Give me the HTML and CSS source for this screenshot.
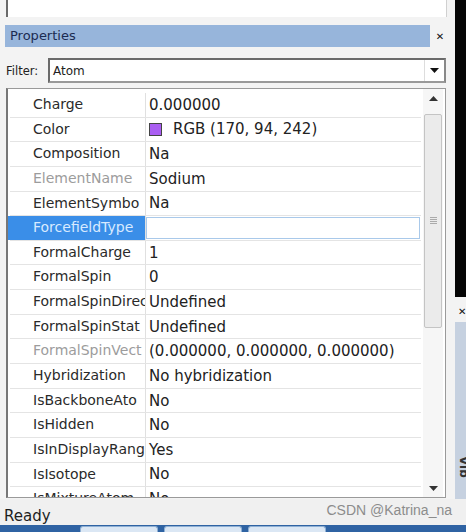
FILE: index.html
```html
<!DOCTYPE html>
<html>
<head>
<meta charset="utf-8">
<link rel="stylesheet" href="styles.css">
</head>
<body>
<div class="app">
  <div class="workspace">
    <div class="main">
      <div class="topbox"></div>
      <div class="header">
        <div class="title">Properties</div>
        <div class="close">&#x2715;</div>
      </div>
      <div class="filter">
        <span class="filter-label">Filter:</span>
        <div class="combo">
          <span class="combo-text">Atom</span>
          <span class="combo-btn"><svg width="9" height="5" viewBox="0 0 9 5"><path d="M0 0H9L4.5 5Z" fill="#111"/></svg></span>
        </div>
      </div>
      <div class="grid">
        <div class="rows">
          <div class="row"><span class="gut"></span><span class="name">Charge</span><span class="val">0.000000</span></div>
          <div class="row"><span class="gut"></span><span class="name">Color</span><span class="val"><span class="swatch"></span>RGB (170, 94, 242)</span></div>
          <div class="row"><span class="gut"></span><span class="name">Composition</span><span class="val">Na</span></div>
          <div class="row"><span class="gut"></span><span class="name dim">ElementName</span><span class="val">Sodium</span></div>
          <div class="row"><span class="gut"></span><span class="name">ElementSymbo</span><span class="val">Na</span></div>
          <div class="row sel"><span class="gut"></span><span class="name">ForcefieldType</span><span class="val edit"></span></div>
          <div class="row"><span class="gut"></span><span class="name">FormalCharge</span><span class="val">1</span></div>
          <div class="row"><span class="gut"></span><span class="name">FormalSpin</span><span class="val">0</span></div>
          <div class="row"><span class="gut"></span><span class="name">FormalSpinDirec</span><span class="val">Undefined</span></div>
          <div class="row"><span class="gut"></span><span class="name">FormalSpinStat</span><span class="val">Undefined</span></div>
          <div class="row"><span class="gut"></span><span class="name dim">FormalSpinVect</span><span class="val">(0.000000, 0.000000, 0.000000)</span></div>
          <div class="row"><span class="gut"></span><span class="name">Hybridization</span><span class="val">No hybridization</span></div>
          <div class="row"><span class="gut"></span><span class="name">IsBackboneAto</span><span class="val">No</span></div>
          <div class="row"><span class="gut"></span><span class="name">IsHidden</span><span class="val">No</span></div>
          <div class="row"><span class="gut"></span><span class="name">IsInDisplayRang</span><span class="val">Yes</span></div>
          <div class="row"><span class="gut"></span><span class="name">IsIsotope</span><span class="val">No</span></div>
          <div class="row"><span class="gut"></span><span class="name">IsMixtureAtom</span><span class="val">No</span></div>
        </div>
        <div class="scrollbar">
          <div class="arrow"><svg width="9" height="5" viewBox="0 0 9 5"><path d="M0 5H9L4.5 0Z" fill="#333"/></svg></div>
          <div class="track">
            <div class="thumb"><span class="grip"></span></div>
          </div>
          <div class="arrow"><svg width="9" height="5" viewBox="0 0 9 5"><path d="M0 0H9L4.5 5Z" fill="#333"/></svg></div>
        </div>
      </div>
    </div>
    <div class="side">
      <div class="side-black"></div>
      <div class="side-close">&#x2715;</div>
      <div class="side-panel"><span class="side-label">Vib</span></div>
    </div>
  </div>
  <div class="status">
    <span class="ready">Ready</span>
    <span class="mark">CSDN @Katrina_na</span>
  </div>
  <div class="taskbar">
    <span class="tb-start"></span>
    <span class="tb-btn"></span>
    <span class="tb-btn"></span>
    <span class="tb-btn"></span>
  </div>
</div>
</body>
</html>
```
FILE: styles.css
```css
html, body {
  margin: 0;
  padding: 0;
}
body {
  width: 466px;
  height: 532px;
  overflow: hidden;
  background: #f3f3f3;
  font-family: "DejaVu Sans", sans-serif;
}
.app {
  display: flex;
  flex-direction: column;
  height: 532px;
}
.workspace {
  display: flex;
  height: 499px;
}
.main {
  width: 455px;
  display: flex;
  flex-direction: column;
}
.topbox {
  margin-left: 6px;
  width: 438px;
  height: 17px;
  background: #fff;
  border-left: 2px solid #6a6a6a;
  border-right: 1px solid #d0d0d0;
}
.header {
  margin-top: 8px;
  height: 22px;
  display: flex;
  align-items: center;
}
.title {
  margin-left: 5px;
  width: 420px;
  height: 22px;
  padding-left: 5px;
  line-height: 22px;
  background: #97b5db;
  color: #1b2b52;
  font-size: 13px;
}
.close {
  width: 20px;
  text-align: center;
  font-size: 10px;
  font-weight: bold;
  color: #111;
}
.filter {
  margin-top: 11px;
  height: 25px;
  display: flex;
  align-items: center;
}
.filter-label {
  width: 42px;
  padding-left: 6px;
  font-size: 11.5px;
  color: #222;
}
.combo {
  width: 394px;
  height: 21px;
  background: #fff;
  border: 2px solid #6a6a6a;
  border-right-color: #888;
  border-bottom-color: #999;
  display: flex;
  align-items: center;
}
.combo-text {
  flex: 1;
  padding-left: 3px;
  font-size: 12px;
  color: #222;
}
.combo-btn {
  width: 19px;
  height: 21px;
  display: flex;
  align-items: center;
  justify-content: center;
  border-left: 1px solid #ddd;
}
.grid {
  margin-top: 5px;
  margin-left: 6px;
  width: 437px;
  height: 408px;
  background: #fff;
  border: 1px solid #9a9a9a;
  border-left: 2px solid #777;
  display: flex;
}
.rows {
  flex: 1;
  padding-top: 4px;
  overflow: hidden;
}
.row {
  display: grid;
  grid-template-columns: 19px 117px 1fr;
  height: 24.65px;
  box-sizing: border-box;
  border-bottom: 1px solid #e4e4e4;
  margin-left: 2px;
  align-items: center;
}
.gut {
  height: 100%;
}
.name {
  height: 100%;
  line-height: 23px;
  padding-left: 4px;
  border-right: 1px solid #e0e0e0;
  font-size: 14px;
  color: #2a2a2a;
  white-space: nowrap;
  overflow: hidden;
}
.name.dim {
  color: #9c9c9c;
}
.val {
  padding-left: 3px;
  font-size: 15px;
  color: #222;
  white-space: nowrap;
  overflow: hidden;
  display: flex;
  align-items: center;
}
.swatch {
  width: 11px;
  height: 11px;
  background: rgb(170, 94, 242);
  border: 1px solid #444;
  margin-right: 11px;
}
.row.sel .gut,
.row.sel .name {
  background: #3a8ee8;
  color: #d8eaff;
}
.row.sel .gut {
  margin-left: -2px;
  width: 21px;
}
.val.edit {
  height: 22px;
  box-sizing: border-box;
  border: 1px solid #a9c9ea;
  margin-right: 1px;
}
.scrollbar {
  width: 20px;
  margin-left: 2px;
  margin-right: 2px;
  display: flex;
  flex-direction: column;
  background: #f6f6f6;
}
.arrow {
  height: 18px;
  display: flex;
  align-items: center;
  justify-content: center;
}
.track {
  flex: 1;
  padding-top: 7px;
}
.thumb {
  height: 212px;
  margin: 0 1px;
  background: #ebebeb;
  border: 1px solid #c4c4c4;
  border-radius: 2px;
  display: flex;
  align-items: center;
  justify-content: center;
}
.grip {
  width: 7px;
  height: 8px;
  background: repeating-linear-gradient(#aaa 0 1px, #ebebeb 1px 2px);
}
.side {
  width: 11px;
  display: flex;
  flex-direction: column;
}
.side-black {
  height: 297px;
  background: #050505;
}
.side-close {
  height: 25px;
  line-height: 30px;
  padding-left: 3px;
  font-size: 10px;
  font-weight: bold;
  color: #111;
  overflow: hidden;
}
.side-panel {
  height: 177px;
  background: #c6d1e0;
  position: relative;
  overflow: hidden;
}
.side-label {
  position: absolute;
  left: 2px;
  top: 134px;
  writing-mode: vertical-rl;
  font-size: 12px;
  font-weight: bold;
  color: #333;
}
.status {
  height: 26px;
  display: flex;
  justify-content: space-between;
  background: #f0f0f0;
  padding: 0 14px 0 4px;
}
.ready {
  align-self: flex-end;
  font-size: 15px;
  line-height: 18px;
  color: #1e1e1e;
}
.mark {
  align-self: center;
  font-family: "Liberation Sans", Arial, sans-serif;
  font-size: 14px;
  color: #8c8c8c;
  margin-top: -4px;
}
.taskbar {
  flex: 1;
  display: flex;
  gap: 6px;
  background: #2f63a3;
  align-items: flex-end;
}
.tb-start {
  width: 74px;
}
.tb-btn {
  width: 76px;
  height: 5px;
  background: #dbe7f4;
  border: 1px solid #8fb0d4;
  border-bottom: none;
  border-radius: 3px 3px 0 0;
}
```
